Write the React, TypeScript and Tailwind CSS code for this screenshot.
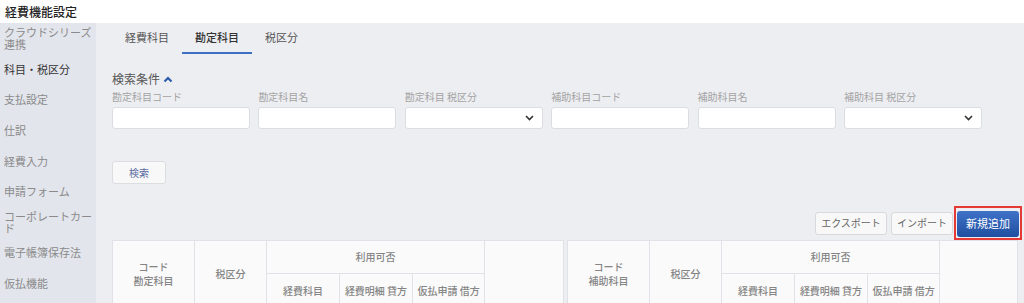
const sideItems: { label: string; active?: boolean }[] = [
  { label: 'クラウドシリーズ連携' },
  { label: '科目・税区分', active: true },
  { label: '支払設定' },
  { label: '仕訳' },
  { label: '経費入力' },
  { label: '申請フォーム' },
  { label: 'コーポレートカード' },
  { label: '電子帳簿保存法' },
  { label: '仮払機能' },
];

const tabs = [
  { label: '経費科目' },
  { label: '勘定科目', active: true },
  { label: '税区分' },
];

const filters: { label: string; select?: boolean }[] = [
  { label: '勘定科目コード' },
  { label: '勘定科目名' },
  { label: '勘定科目 税区分', select: true },
  { label: '補助科目コード' },
  { label: '補助科目名' },
  { label: '補助科目 税区分', select: true },
];

function SelectChevron() {
  return (
    <svg width="9" height="6" viewBox="0 0 9 6" className="absolute right-[8px] top-1/2 -translate-y-1/2">
      <polyline points="1,1 4.5,4.5 8,1" fill="none" stroke="#333" strokeWidth="1.6" />
    </svg>
  );
}

function HeaderTable({ first }: { first: string }) {
  const th = 'border border-[#e1e2e7] bg-[#fafafa] text-[10px] font-medium text-[#858585] text-center align-middle leading-[14px] p-0';
  return (
    <table className="table-fixed border-collapse w-full bg-[#fafafa]">
      <colgroup>
        <col className="w-[82px]" />
        <col className="w-[72px]" />
        <col className="w-[73px]" />
        <col className="w-[73px]" />
        <col className="w-[72px]" />
        <col />
      </colgroup>
      <thead>
        <tr className="h-[33px]">
          <th rowSpan={2} className={th}>
            コード
            <br />
            {first}
          </th>
          <th rowSpan={2} className={th}>税区分</th>
          <th colSpan={3} className={th}>利用可否</th>
          <th rowSpan={2} className={th}></th>
        </tr>
        <tr className="h-[34px]">
          <th className={th}>経費科目</th>
          <th className={th}>経費明細 貸方</th>
          <th className={th}>仮払申請 借方</th>
        </tr>
      </thead>
    </table>
  );
}

export default function App() {
  return (
    <div className="w-[1024px] h-[303px] overflow-hidden bg-white font-['Noto_Sans_CJK_JP','Noto_Sans',sans-serif]">
      {/* Page title */}
      <div className="h-[23px] pl-[5px] flex items-center">
        <h1 className="text-[12px] font-medium text-[#222] leading-none">経費機能設定</h1>
      </div>

      <div className="flex h-[280px]">
        {/* Side menu */}
        <nav className="w-[96px] shrink-0 bg-[#e3e5ec] pl-[4px]">
          {sideItems.map((item) => (
            <div key={item.label} className="h-[30.6px] flex items-center">
              <span
                className={`text-[11px] leading-[12px] ${item.active ? 'text-[#333]' : 'text-[#8a8a8a]'}`}
              >
                {item.label}
              </span>
            </div>
          ))}
        </nav>

        {/* Main */}
        <main className="flex-1 bg-[#edeef2] pl-[16px] pr-[6px]">
          {/* Tabs */}
          <div className="flex h-[31px]">
            {tabs.map((t) => (
              <div
                key={t.label}
                className={`px-[13px] flex items-center text-[11px] border-b-2 ${
                  t.active ? 'border-[#3d6fc2] text-[#333] font-medium' : 'border-transparent text-[#555]'
                }`}
              >
                {t.label}
              </div>
            ))}
          </div>

          {/* Search conditions */}
          <div className="mt-[17px] flex items-center gap-[3px] h-[16px]">
            <span className="text-[12px] text-[#555] leading-none">検索条件</span>
            <svg width="10" height="7" viewBox="0 0 10 7">
              <polyline points="1.5,5.5 5,2 8.5,5.5" fill="none" stroke="#2d5ca8" strokeWidth="2.2" />
            </svg>
          </div>

          <div className="grid grid-cols-6 gap-x-[8.3px] w-[870px] mt-[4px]">
            {filters.map((f) => (
              <div key={f.label}>
                <div className="text-[10px] leading-[12px] h-[12px] text-[#a3a3a3] whitespace-nowrap">{f.label}</div>
                <div className="relative mt-[4px] h-[22px] bg-white border border-[#dcdde2] rounded-[3px]">
                  {f.select && <SelectChevron />}
                </div>
              </div>
            ))}
          </div>

          <button className="mt-[32px] w-[54px] h-[23px] bg-[#f8f8f9] border border-[#dcdde1] rounded-[3px] text-[10px] text-[#5a6aa0] leading-none">
            検索
          </button>

          {/* Actions */}
          <div className="mt-[23px] h-[32px] flex items-center justify-end mr-[-4px]">
            <button className="w-[72px] h-[23px] bg-[#f8f8f8] border border-[#d9d9dc] rounded-[3px] text-[10px] text-[#666] leading-none">
              エクスポート
            </button>
            <button className="ml-[4px] w-[62px] h-[23px] bg-[#f8f8f8] border border-[#d9d9dc] rounded-[3px] text-[10px] text-[#666] leading-none">
              インポート
            </button>
            <div className="ml-[1px] border-2 border-[#e53935] p-px">
              <button className="w-[62px] h-[26px] rounded-[3px] bg-gradient-to-b from-[#3f72c8] to-[#1f4fa0] text-white text-[11px] leading-none">
                新規追加
              </button>
            </div>
          </div>

          {/* Tables */}
          <div className="mt-[1px] flex gap-[3px]">
            <div className="w-[452px]">
              <HeaderTable first="勘定科目" />
            </div>
            <div className="w-[451px]">
              <HeaderTable first="補助科目" />
            </div>
          </div>
        </main>
      </div>
    </div>
  );
}
